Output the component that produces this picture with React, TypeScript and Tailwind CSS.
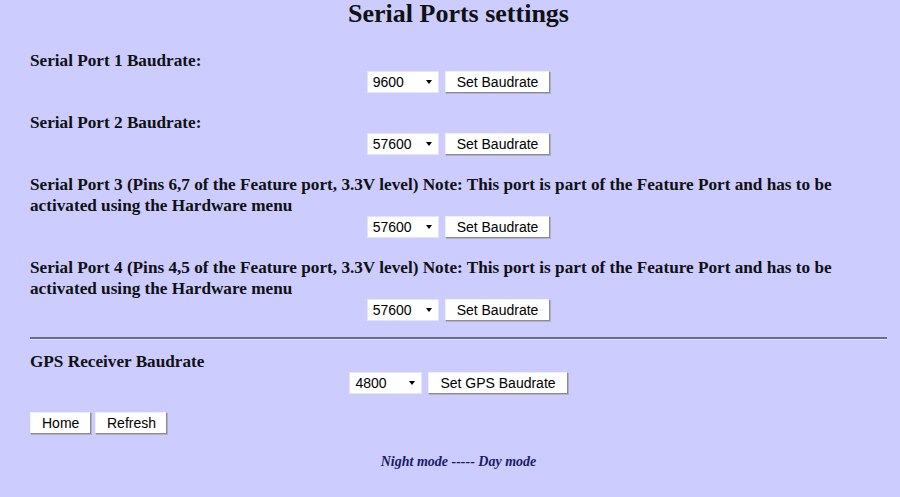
import React from 'react';

const serif = "font-['Liberation_Serif','Times_New_Roman',serif]";
const sans = "font-['Liberation_Sans',Arial,sans-serif]";

const BaudSelect: React.FC<{ value: string; w?: string }> = ({ value, w = 'w-[72px]' }) => (
  <div
    role="combobox"
    className={`${sans} ${w} h-[22px] flex items-center justify-between bg-white border border-[#e4e4f4] pl-[5px] pr-[6px] pt-[2px] text-[14px] text-black`}
  >
    <span>{value}</span>
    <span className="w-0 h-0 -mt-[1px] border-l-[3.5px] border-r-[3.5px] border-t-[4px] border-l-transparent border-r-transparent border-t-black" />
  </div>
);

const Btn: React.FC<{ label: string; className?: string }> = ({ label, className = '' }) => (
  <button
    className={`${sans} h-[22px] px-[11px] bg-white text-[14px] text-black border border-t-[#f0f0f0] border-l-[#f0f0f0] border-r-[#8a8a9a] border-b-[#8a8a9a] shadow-[1px_1px_0_#b0b0c0] ${className}`}
  >
    {label}
  </button>
);

const Row: React.FC<{ value: string; label: string; w?: string }> = ({ value, label, w }) => (
  <div className="flex justify-center items-center gap-[6px] h-[21px]">
    <BaudSelect value={value} w={w} />
    <Btn label={label} />
  </div>
);

const Label: React.FC<{ children: React.ReactNode }> = ({ children }) => (
  <div className={`${serif} font-bold text-[17.2px] leading-[21px] text-[#111]`}>{children}</div>
);

export default function App() {
  const ports = [
    { text: 'Serial Port 1 Baudrate:', value: '9600' },
    { text: 'Serial Port 2 Baudrate:', value: '57600' },
    {
      text: 'Serial Port 3 (Pins 6,7 of the Feature port, 3.3V level) Note: This port is part of the Feature Port and has to be activated using the Hardware menu',
      value: '57600',
    },
    {
      text: 'Serial Port 4 (Pins 4,5 of the Feature port, 3.3V level) Note: This port is part of the Feature Port and has to be activated using the Hardware menu',
      value: '57600',
    },
  ];

  return (
    <div className="min-h-[497px] w-full bg-[#ccccff] pl-[30px] pr-[13px] pt-0 pb-4">
      <h1 className={`${serif} font-bold text-[26px] leading-[28px] text-center text-[#111]`}>
        Serial Ports settings
      </h1>

      <div className="flex flex-col gap-[20px] mt-[22px]">
        {ports.map((p) => (
          <div key={p.text}>
            <Label>{p.text}</Label>
            <Row value={p.value} label="Set Baudrate" />
          </div>
        ))}
      </div>

      <hr className="mt-[17px] mb-[11px] border-0 border-t-2 border-t-[#6a6a99] border-b border-b-[#e6e6ff]" />

      <div>
        <Label>GPS Receiver Baudrate</Label>
        <Row value="4800" label="Set GPS Baudrate" w="w-[73px]" />
      </div>

      <div className="flex gap-[4px] mt-[19px]">
        <Btn label="Home" className="w-[61px] px-0" />
        <Btn label="Refresh" className="w-[72px] px-0" />
      </div>

      <p className={`${serif} mt-[17px] text-center font-bold italic text-[14px] text-[#1a1a66]`}>
        Night mode ----- Day mode
      </p>
    </div>
  );
}
